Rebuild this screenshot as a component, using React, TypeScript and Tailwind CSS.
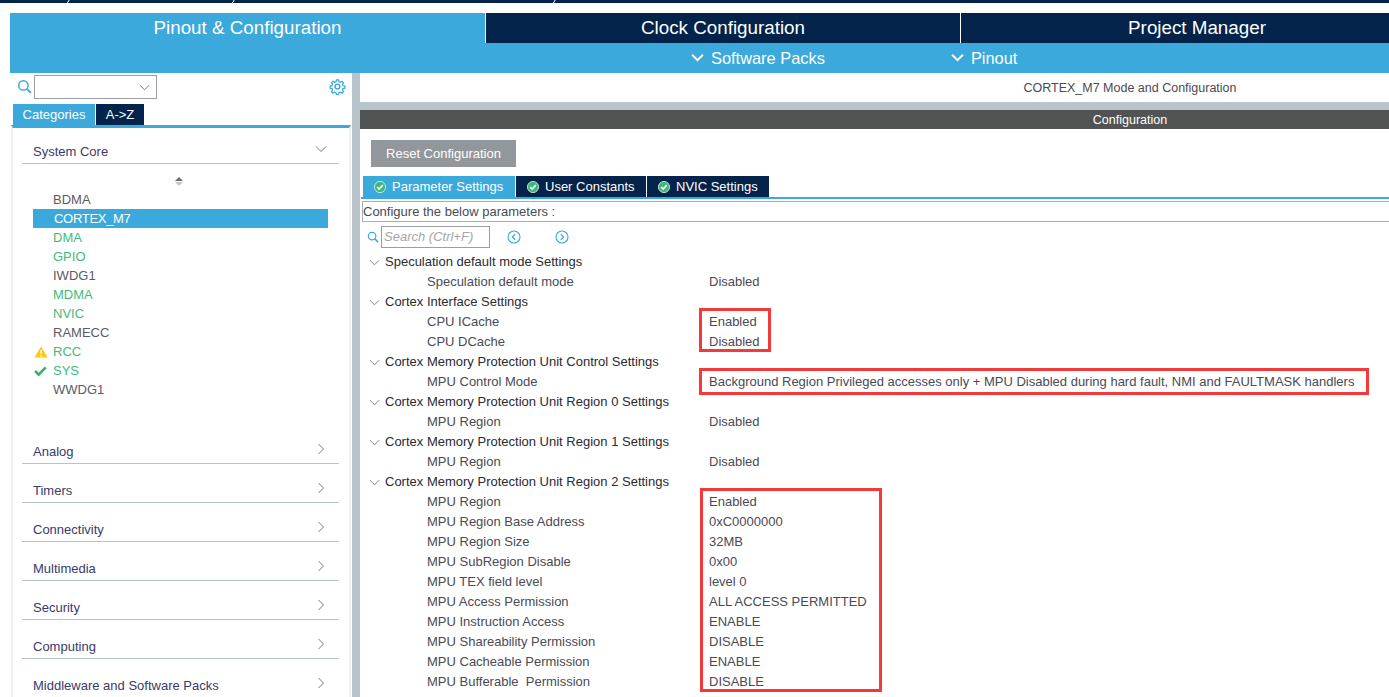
import React from "react";

const Chevron = ({ dir, className = "" }: { dir: "down" | "right" | "left"; className?: string }) => (
  <svg viewBox="0 0 12 12" className={className} fill="none" stroke="currentColor" strokeWidth="1">
    {dir === "down" ? <path d="M1 3.5 L6 8.5 L11 3.5" /> : <path d="M3.5 1 L8.5 6 L3.5 11" />}
  </svg>
);

const Search = ({ className = "" }: { className?: string }) => (
  <svg viewBox="0 0 16 16" className={className} fill="none" stroke="currentColor" strokeWidth="1.6">
    <circle cx="6.8" cy="6.8" r="5" />
    <path d="M10.5 10.5 L14.8 14.8" strokeWidth="2" />
  </svg>
);

const CheckCircle = () => (
  <svg viewBox="0 0 12 12" className="h-[12px] w-[12px] shrink-0">
    <circle cx="6" cy="6" r="5.6" fill="#3cb878" stroke="#e4f5ec" strokeWidth="0.8" />
    <path d="M3.2 6.1 L5.2 8 L8.8 4.2" fill="none" stroke="#fff" strokeWidth="1.7" />
  </svg>
);

const Gear = () => (
  <svg viewBox="0 0 24 24" className="h-[17px] w-[17px] text-[#3ba9dc]" fill="none" stroke="currentColor" strokeWidth="2">
    <circle cx="12" cy="12" r="3.4" />
    <path d="M10.3 1.5h3.4l.6 3 2.1.9 2.6-1.7 2.4 2.4-1.7 2.6.9 2.1 3 .6v3.4l-3 .6-.9 2.1 1.7 2.6-2.4 2.4-2.6-1.7-2.1.9-.6 3h-3.4l-.6-3-2.1-.9-2.6 1.7-2.4-2.4 1.7-2.6-.9-2.1-3-.6v-3.4l3-.6.9-2.1-1.7-2.6 2.4-2.4 2.6 1.7 2.1-.9z" transform="translate(1.2 1.2) scale(0.9)" />
  </svg>
);

const NavCircle = ({ left }: { left?: boolean }) => (
  <svg viewBox="0 0 14 14" className="h-[14px] w-[14px] text-[#3ba9dc]" fill="none" stroke="currentColor" strokeWidth="1.1">
    <circle cx="7" cy="7" r="6" />
    <path d={left ? "M8.2 4.2 L5.4 7 L8.2 9.8" : "M5.8 4.2 L8.6 7 L5.8 9.8"} strokeWidth="1.3" />
  </svg>
);

const components: { name: string; color: string; icon?: "warn" | "ok"; selected?: boolean }[] = [
  { name: "BDMA", color: "text-[#5b5b66]" },
  { name: "CORTEX_M7", color: "text-white tracking-[-0.3px]", selected: true },
  { name: "DMA", color: "text-[#3fba7c]" },
  { name: "GPIO", color: "text-[#3fba7c]" },
  { name: "IWDG1", color: "text-[#5b5b66]" },
  { name: "MDMA", color: "text-[#3fba7c]" },
  { name: "NVIC", color: "text-[#3fba7c]" },
  { name: "RAMECC", color: "text-[#5b5b66]" },
  { name: "RCC", color: "text-[#3fba7c]", icon: "warn" },
  { name: "SYS", color: "text-[#3fba7c]", icon: "ok" },
  { name: "WWDG1", color: "text-[#5b5b66]" },
];

const categories = ["Analog", "Timers", "Connectivity", "Multimedia", "Security", "Computing", "Middleware and Software Packs"];

type Row = { h?: string; k?: string; v?: string };
const rows: Row[] = [
  { h: "Speculation default mode Settings" },
  { k: "Speculation default mode", v: "Disabled" },
  { h: "Cortex Interface Settings" },
  { k: "CPU ICache", v: "Enabled" },
  { k: "CPU DCache", v: "Disabled" },
  { h: "Cortex Memory Protection Unit Control Settings" },
  { k: "MPU Control Mode", v: "Background Region Privileged accesses only + MPU Disabled during hard fault, NMI and FAULTMASK handlers" },
  { h: "Cortex Memory Protection Unit Region 0 Settings" },
  { k: "MPU Region", v: "Disabled" },
  { h: "Cortex Memory Protection Unit Region 1 Settings" },
  { k: "MPU Region", v: "Disabled" },
  { h: "Cortex Memory Protection Unit Region 2 Settings" },
  { k: "MPU Region", v: "Enabled" },
  { k: "MPU Region Base Address", v: "0xC0000000" },
  { k: "MPU Region Size", v: "32MB" },
  { k: "MPU SubRegion Disable", v: "0x00" },
  { k: "MPU TEX field level", v: "level 0" },
  { k: "MPU Access Permission", v: "ALL ACCESS PERMITTED" },
  { k: "MPU Instruction Access", v: "ENABLE" },
  { k: "MPU Shareability Permission", v: "DISABLE" },
  { k: "MPU Cacheable Permission", v: "ENABLE" },
  { k: "MPU Bufferable  Permission", v: "DISABLE" },
  { h: "Cortex Memory Protection Unit Region 3 Settings" },
];

const SubTab = ({ label, active, width }: { label: string; active?: boolean; width: string }) => (
  <div className={`flex h-[21px] items-center gap-[6px] pl-[11px] text-white ${width} ${active ? "bg-[#3ba9dc]" : "bg-[#03234b]"}`}>
    <CheckCircle />
    <span>{label}</span>
  </div>
);

const Tick = ({ className }: { className: string }) => (
  <svg viewBox="0 0 4 4" className={`absolute top-0 h-[4px] w-[4px] ${className}`}>
    <path d="M3.2 0 L1 3.6" stroke="#fff" strokeWidth="1" fill="none" />
  </svg>
);

export default function App() {
  return (
    <div className="relative flex h-[697px] w-[1389px] flex-col overflow-hidden bg-white font-['Liberation_Sans',Arial,sans-serif] text-[13px]">
      <div className="h-[3px] shrink-0 bg-[#03234b]" />
      <Tick className="left-[66px]" />
      <Tick className="left-[231px]" />
      <Tick className="left-[552px]" />
      <div className="h-[10px] shrink-0 bg-white" />
      {/* Main tabs */}
      <div className="ml-[10px] flex h-[30px] shrink-0 overflow-hidden text-[18.8px] text-white">
        <div className="flex w-[475px] shrink-0 items-center justify-center bg-[#3ba9dc] pt-[1px]">Pinout &amp; Configuration</div>
        <div className="flex w-[475px] shrink-0 items-center justify-center border-l border-white bg-[#03234b] pt-[1px]">Clock Configuration</div>
        <div className="flex w-[473px] shrink-0 items-center justify-center border-l border-white bg-[#03234b] pt-[1px]">Project Manager</div>
      </div>
      {/* Sub menu */}
      <div className="ml-[10px] flex h-[30px] shrink-0 items-center bg-[#3ba9dc] text-[16.4px] text-white">
        <div className="ml-[681px] flex items-center gap-[7px]">
          <Chevron dir="down" className="h-[13px] w-[13px] [stroke-width:1.8]" />
          <span>Software Packs</span>
        </div>
        <div className="ml-[126px] flex items-center gap-[7px]">
          <Chevron dir="down" className="h-[13px] w-[13px] [stroke-width:1.8]" />
          <span>Pinout</span>
        </div>
      </div>
      <div className="flex min-h-0 flex-1">
        {/* Left panel */}
        <div className="ml-[10px] flex w-[342px] shrink-0 flex-col">
          <div className="flex h-[31px] shrink-0 items-start pl-[7px] pr-[6px] pt-[2px]">
            <Search className="mt-[4px] h-[15px] w-[15px] text-[#3ba9dc]" />
            <div className="ml-[2px] flex h-[24px] w-[123px] items-center justify-end border border-[#9a9fa3] pr-[6px] text-[#6c7074]">
              <Chevron dir="down" className="h-[11px] w-[11px]" />
            </div>
            <div className="ml-auto mt-[3px]"><Gear /></div>
          </div>
          <div className="flex h-[21px] shrink-0 gap-[1px] pl-[3px] text-white">
            <div className="flex w-[82px] items-center justify-center bg-[#3ba9dc]">Categories</div>
            <div className="flex w-[48px] items-center justify-center bg-[#03234b]">A-&gt;Z</div>
          </div>
          <div className="ml-[1px] mr-[1px] flex min-h-0 flex-1 flex-col border-x-2 border-t-[3px] border-x-[#f0f1f2] border-t-[#3ba9dc] pl-[9px] pr-[10px] text-[#3a3a6a]">
            <div className="flex h-[36px] shrink-0 items-end justify-between border-b border-[#b9c3ca] pb-[2px] pl-[11px] pr-[12px] text-[#3a3a6a]">
              <span>System Core</span>
              <Chevron dir="down" className="mb-[6px] h-[12px] w-[12px] text-[#77797c]" />
            </div>
            <div className="h-[261px] shrink-0">
              <div className="flex h-[26px] flex-col items-center justify-center pr-[4px] pt-[9px]">
                <div className="h-0 w-0 border-x-[4px] border-b-[4px] border-x-transparent border-b-[#6b6f73]" />
                <div className="mt-[1px] h-0 w-0 border-x-[4px] border-t-[4px] border-x-transparent border-t-[#c4c7ca]" />
              </div>
              {components.map((c) => (
                <div key={c.name} className="relative ml-[11px] mr-[11px] h-[19px]">
                  <div className={`flex h-[19px] items-center ${c.selected ? "bg-[#3ba9dc] pl-[21px]" : "pl-[20px]"} ${c.color}`}>{c.name}</div>
                  {c.icon === "warn" && (
                    <svg viewBox="0 0 14 12" className="absolute left-[1px] top-[4px] h-[12px] w-[14px]">
                      <path d="M7 0.5 L13.6 11.5 H0.4 Z" fill="#fdc80f" />
                      <path d="M7 4 V8" stroke="#fff" strokeWidth="1.4" />
                      <path d="M7 9 V10.5" stroke="#fff" strokeWidth="1.4" />
                    </svg>
                  )}
                  {c.icon === "ok" && (
                    <svg viewBox="0 0 14 12" className="absolute left-[1px] top-[4px] h-[12px] w-[13px]">
                      <path d="M1.2 6 L5 10 L12.6 2" fill="none" stroke="#3fae73" strokeWidth="2.8" />
                    </svg>
                  )}
                </div>
              ))}
            </div>
            {categories.map((c, i) => (
              <div key={c} className={`flex h-[39px] shrink-0 items-end justify-between pl-[11px] pr-[12px] ${i < categories.length - 1 ? "border-b border-[#b9c3ca] pb-[2px]" : "pb-[3px]"}`}>
                <span>{c}</span>
                <Chevron dir="right" className="mb-[6px] h-[12px] w-[12px] text-[#77797c]" />
              </div>
            ))}
          </div>
        </div>
        {/* Gutter */}
        <div className="w-[8px] shrink-0 bg-[#b8c3ca]" />
        {/* Right panel: wider than the window, so its centred titles sit right of the visible middle */}
        <div className="flex w-[1540px] shrink-0 flex-col">
          <div className="flex h-[29px] shrink-0 items-center justify-center pt-[1px] text-[12.5px] text-[#4a4a55]">
            CORTEX_M7 Mode and Configuration
          </div>
          <div className="h-[8px] shrink-0 bg-[#b8c3ca]" />
          <div className="flex h-[19px] shrink-0 items-center justify-center bg-[#525453] pt-[1px] text-[12.5px] text-white">Configuration</div>
          <div className="min-h-0 flex-1 overflow-hidden">
            <div className="pl-[11px] pt-[11px]">
              <div className="flex h-[27px] w-[145px] items-center justify-center bg-[#92979b] text-white">Reset Configuration</div>
            </div>
            <div className="ml-[3px] mt-[9px] flex h-[21px] gap-[1px]">
              <SubTab label="Parameter Settings" active width="w-[152px]" />
              <SubTab label="User Constants" width="w-[130px]" />
              <SubTab label="NVIC Settings" width="w-[122px]" />
            </div>
            <div className="ml-[1px] h-[2px] bg-[#3ba9dc]" />
            <div className="ml-[2px] mt-[2px] flex h-[21px] items-center border-y border-l border-[#a9aeb2] text-[#4a4a55]">Configure the below parameters :</div>
            <div className="ml-[7px] mt-[3px] flex h-[23px] items-center">
              <Search className="h-[12px] w-[12px] text-[#3ba9dc]" />
              <div className="ml-[2px] flex h-[22px] w-[109px] items-center border border-[#9a9fa3] pl-[2px] italic text-[#a6a6a6]">Search (Ctrl+F)</div>
              <div className="ml-[17px]"><NavCircle left /></div>
              <div className="ml-[34px]"><NavCircle /></div>
            </div>
            <div className="mt-[4px]">
              {rows.map((r, i) =>
                r.h ? (
                  <div key={i} className="flex h-[20px] items-center pl-[9px] text-[#2a2a33]">
                    <Chevron dir="down" className="mr-[5px] h-[11px] w-[11px] text-[#77797c]" />
                    <span>{r.h}</span>
                  </div>
                ) : (
                  <div key={i} className="flex h-[20px] items-center text-[#4a4a55]">
                    <span className="w-[349px] shrink-0 whitespace-pre pl-[67px]">{r.k}</span>
                    <span className="whitespace-nowrap">{r.v}</span>
                  </div>
                )
              )}
            </div>
          </div>
        </div>
      </div>
      {/* Red annotation boxes drawn over the screenshot */}
      <div className="absolute left-[699px] top-[308px] h-[44px] w-[72px] border-[3px] border-[#f33a3a]" />
      <div className="absolute left-[699px] top-[368px] h-[27px] w-[670px] border-[3px] border-[#f33a3a]" />
      <div className="absolute left-[700px] top-[488px] h-[204px] w-[182px] border-[3px] border-[#f33a3a]" />
    </div>
  );
}
